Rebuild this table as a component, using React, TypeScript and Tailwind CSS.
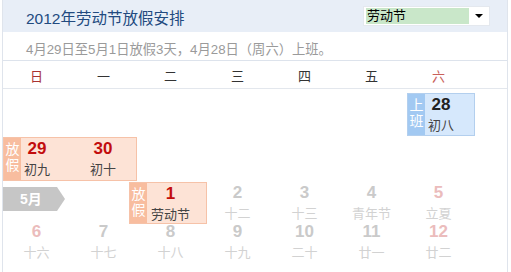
import React from "react";

type Day = { n: number; lunar: string; nc: string; lc: string };

const FONT = "font-['Liberation_Sans','Noto_Sans_CJK_SC',sans-serif]";

function Cell({ d }: { d: Day }) {
  return (
    <div className="flex flex-col items-center pt-[1px]">
      <div className={`h-[20px] leading-[20px] text-[17px] font-bold ${d.nc}`}>{d.n}</div>
      <div className={`h-[22px] leading-[22px] text-[13px] ${d.lc}`}>{d.lunar}</div>
    </div>
  );
}

function Label({ a, b, bg }: { a: string; b: string; bg: string }) {
  return (
    <div
      className={`absolute left-0 top-0 bottom-0 w-[17px] ${bg} text-white text-[14px] leading-[16px] flex flex-col items-center pt-[3px]`}
    >
      <span>{a}</span>
      <span>{b}</span>
    </div>
  );
}

const G = "text-[#cacaca]";
const GL = "text-[#d2d2d2]";
const P = "text-[#ebbcbc]";

export default function App() {
  const row3: Day[] = [
    { n: 2, lunar: "十二", nc: G, lc: GL },
    { n: 3, lunar: "十三", nc: G, lc: GL },
    { n: 4, lunar: "青年节", nc: G, lc: GL },
    { n: 5, lunar: "立夏", nc: P, lc: GL },
  ];
  const row4: Day[] = [
    { n: 6, lunar: "十六", nc: P, lc: GL },
    { n: 7, lunar: "十七", nc: G, lc: GL },
    { n: 8, lunar: "十八", nc: G, lc: GL },
    { n: 9, lunar: "十九", nc: G, lc: GL },
    { n: 10, lunar: "二十", nc: G, lc: GL },
    { n: 11, lunar: "廿一", nc: G, lc: GL },
    { n: 12, lunar: "廿二", nc: P, lc: GL },
  ];
  const weekdays = ["日", "一", "二", "三", "四", "五", "六"];

  return (
    <div className={`w-[511px] h-[272px] overflow-hidden bg-white ${FONT}`}>
      <div className="ml-[2px] w-[506px] h-[272px] border-x border-[#dfe4ec]">
        {/* header */}
        <div className="h-[32px] bg-[#e8eef7] flex items-center justify-between pl-[23px] pr-[17px]">
          <div className="text-[#224a7f] text-[15.5px] pt-[6px]">2012年劳动节放假安排</div>
          <div className="w-[127px] h-[20px] bg-white border border-[#e4e8ee] flex items-center pl-[2px] pr-[1px] py-[1px]">
            <div className="w-[103px] h-[16px] bg-[#c9e7c9] text-[13px] leading-[16px] pl-[1px] text-black">劳动节</div>
            <div className="flex-1 flex justify-center">
              <div className="w-0 h-0 border-x-[4px] border-x-transparent border-t-[4px] border-t-black" />
            </div>
          </div>
        </div>
        {/* subtitle */}
        <div className="h-[29px] border-b border-[#dde3ec] flex items-center pl-[23px] pt-[7px] text-[#9a9a9a] text-[13.3px]">
          4月29日至5月1日放假3天，4月28日（周六）上班。
        </div>
        {/* weekdays */}
        <div className="grid grid-cols-[repeat(7,67px)] h-[28px] border-b border-[#e3e7ed] items-center pt-[5px] text-[13px]">
          {weekdays.map((w, i) => (
            <div
              key={w}
              className={`text-center ${i === 0 ? "text-[#a83232]" : i === 6 ? "text-[#c9605a]" : "text-[#333]"}`}
            >
              {w}
            </div>
          ))}
        </div>
        {/* row 1 */}
        <div className="grid grid-cols-[repeat(7,67px)] pt-[4px]">
          <div className="col-start-7 ml-[2px] mr-[-3px] h-[43px] relative bg-[#d6e8fc] border border-[#b3cfee]">
            <Label a="上" b="班" bg="bg-[#a2c9f2]" />
            <Cell d={{ n: 28, lunar: "初八", nc: "text-[#222]", lc: "text-[#444]" }} />
          </div>
        </div>
        {/* row 2 */}
        <div className="grid grid-cols-[repeat(7,67px)] pt-[1px]">
          <div className="col-span-2 h-[44px] relative bg-[#fde3d6] border border-[#f6c2a8] grid grid-cols-2">
            <Label a="放" b="假" bg="bg-[#f8bd9f]" />
            <Cell d={{ n: 29, lunar: "初九", nc: "text-[#c20d0d]", lc: "text-[#444]" }} />
            <Cell d={{ n: 30, lunar: "初十", nc: "text-[#c20d0d]", lc: "text-[#444]" }} />
          </div>
        </div>
        {/* row 3 */}
        <div className="grid grid-cols-[repeat(7,67px)] pt-[1px] h-[40px]">
          <div className="col-span-2 pt-[5px]">
            <div className="w-[62px] h-[24px] bg-[#c6c6c6] text-white font-bold text-[14px] leading-[24px] pl-[17px] [clip-path:polygon(0_0,54px_0,100%_50%,54px_100%,0_100%)]">
              5月
            </div>
          </div>
          <div className="ml-[-8px] mr-[-3px] h-[42px] relative z-10 bg-[#fde3d6] border border-[#f6c2a8] pl-[8px] pr-[3px]">
            <Label a="放" b="假" bg="bg-[#f8bd9f]" />
            <Cell d={{ n: 1, lunar: "劳动节", nc: "text-[#c20d0d]", lc: "text-[#444]" }} />
          </div>
          {row3.map((d) => (
            <Cell key={d.n} d={d} />
          ))}
        </div>
        {/* row 4 */}
        <div className="grid grid-cols-[repeat(7,67px)]">
          {row4.map((d) => (
            <Cell key={d.n} d={d} />
          ))}
        </div>
      </div>
    </div>
  );
}
